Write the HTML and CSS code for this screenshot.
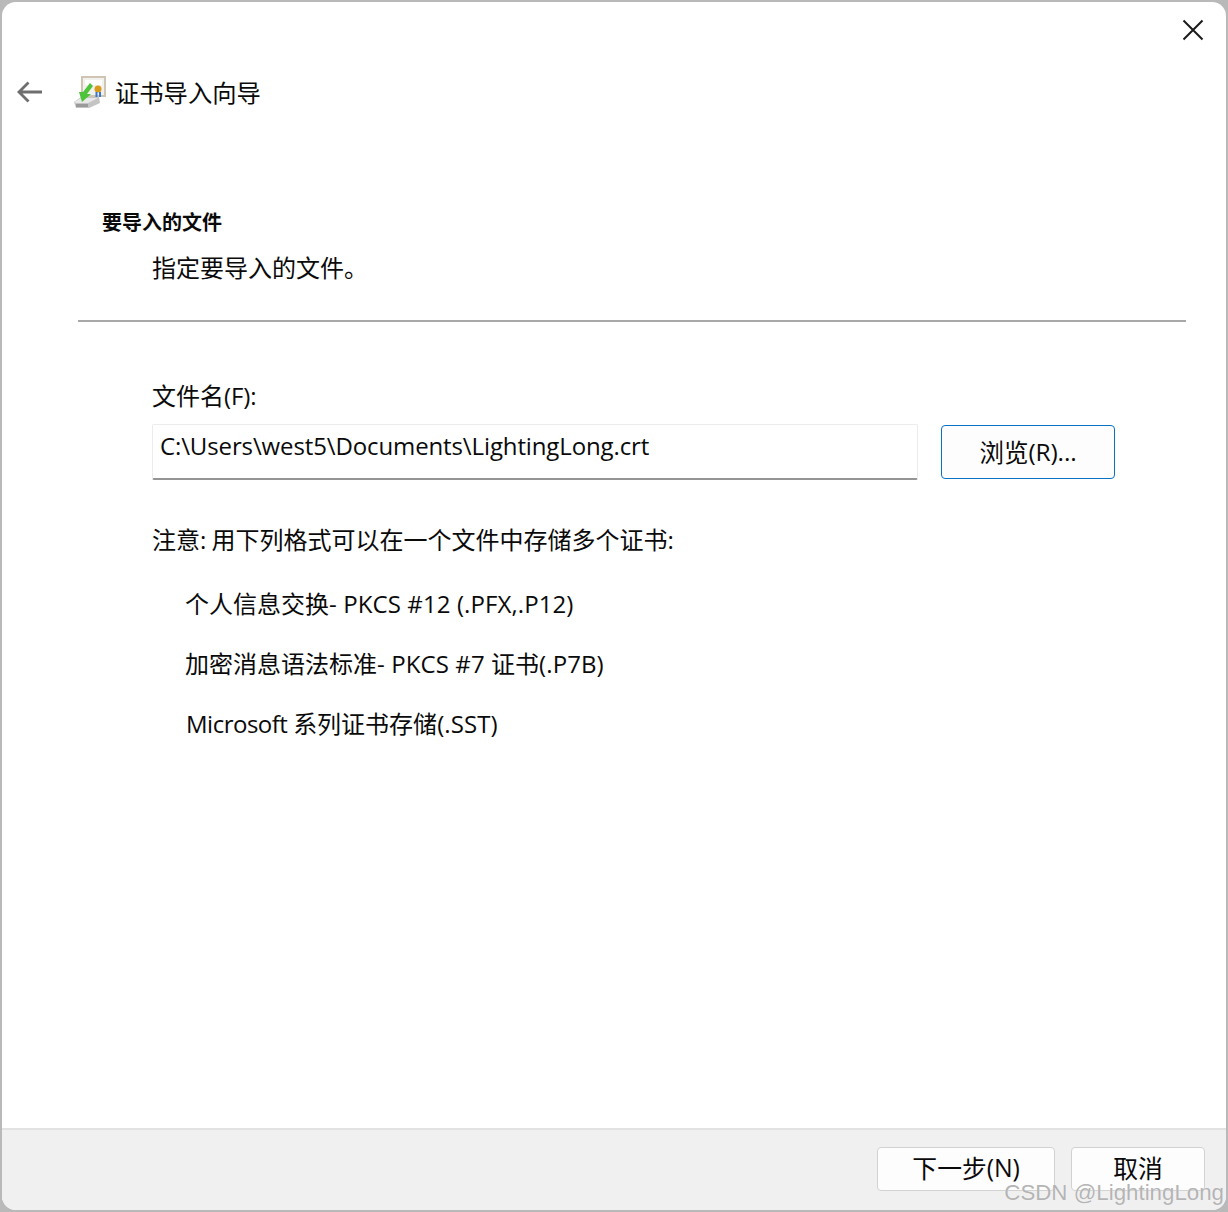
FILE: index.html
```html
<!DOCTYPE html>
<html lang="zh-CN">
<head>
<meta charset="utf-8">
<title>证书导入向导</title>
<link rel="stylesheet" href="styles.css">
</head>
<body>
<div class="window">
  <div class="close-row">
    <svg class="close" width="22" height="22" viewBox="0 0 22 22"><path d="M1.5 1.5L20.5 20.5M20.5 1.5L1.5 20.5" stroke="#1a1a1a" stroke-width="2" fill="none"/></svg>
  </div>
  <div class="title-row">
    <svg class="back" width="26" height="22" viewBox="0 0 26 22"><path d="M25 11H2M11.5 1.500L2 11l9.500 9.500" stroke="#6e6e6e" stroke-width="2.800" fill="none"/></svg>
    <svg class="app-icon" width="34" height="34" viewBox="0 0 34 34">
      <rect x="9" y="2" width="23" height="19" fill="#f1f1ee" stroke="#cfc5b2" stroke-width="2"/>
      <rect x="12" y="5" width="17" height="5" fill="#fff"/>
      <circle cx="25" cy="14" r="3.500" fill="#d99a1c"/>
      <rect x="22.500" y="17" width="2" height="5" fill="#3a78d0"/>
      <rect x="26" y="17" width="2" height="5" fill="#3a78d0"/>
      <path d="M1 27L8 22H26L27 28L16 33H3Z" fill="#c4c4c4"/>
      <path d="M1 27L8 23H25L15 28H3Z" fill="#e8e8e8"/>
      <path d="M3 29H15V32H3Z" fill="#9a9a9a"/>
      <path d="M17 8L20 11L14 19H18L9 27L6 17H10Z" fill="#4fc43a"/>
    </svg>
    <span class="title">证书导入向导</span>
  </div>
  <div class="heading">要导入的文件</div>
  <div class="subheading">指定要导入的文件。</div>
  <hr class="divider">
  <div class="main">
    <div class="label">文件名<span class="lat">(F):</span></div>
    <div class="file-row">
      <div class="input lat">C:\Users\west5\Documents\LightingLong.crt</div>
      <button class="btn btn-focus">浏览<span class="lat">(R)...</span></button>
    </div>
    <div class="note">注意<span class="lat">:</span> 用下列格式可以在一个文件中存储多个证书<span class="lat">:</span></div>
    <ul class="formats">
      <li>个人信息交换<span class="lat wide">- PKCS #12 (.PFX,.P12)</span></li>
      <li>加密消息语法标准<span class="lat wide">- PKCS #7 </span>证书<span class="lat wide">(.P7B)</span></li>
      <li class="ms"><span class="lat tight">Microsoft </span>系列证书存储<span class="lat wide">(.SST)</span></li>
    </ul>
  </div>
  <div class="footer">
    <button class="btn btn-next">下一步<span class="lat">(N)</span></button>
    <button class="btn btn-cancel">取消</button>
    <span class="watermark">CSDN @LightingLong</span>
  </div>
</div>
</body>
</html>
```
FILE: styles.css
```css
* { box-sizing: border-box; }
html, body { margin: 0; height: 100%; }
body {
  width: 1228px;
  height: 1212px;
  overflow: hidden;
  background: #b9b9b9;
  font-family: "Noto Sans CJK SC", "Noto Sans", sans-serif;
  font-size: 24px;
  color: #0a0a0a;
}
.window {
  position: relative;
  width: 1224px;
  height: 1208px;
  margin-left: 2px;
  margin-top: 2px;
  background: #fff;
  border-radius: 14px;
  display: flex;
  flex-direction: column;
  overflow: hidden;
}
.lat { font-family: "Open Sans", "Noto Sans CJK SC", sans-serif; letter-spacing: -0.12px; }
.lat.wide { letter-spacing: 0.1px; }
.lat.tight { letter-spacing: -0.5px; }
.close-row { height: 68px; display: flex; justify-content: flex-end; padding: 17px 22px 0 0; flex: none; }
.close { display: block; }
.title-row { height: 44px; display: flex; align-items: center; padding-left: 15px; flex: none; }
.back { margin-right: 30px; }
.app-icon { margin-right: 8px; }
.title { line-height: 34px; font-size: 24.300px; }
.heading { margin: 93px 0 0 100px; font-size: 20px; line-height: 30px; font-weight: 700; flex: none; }
.subheading { margin: 15px 0 0 150px; line-height: 30px; flex: none; }
.divider { margin: 38px 40px 0 76px; border: 0; height: 2px; background: #a8a8a8; flex: none; }
.main { flex: 1; padding: 58px 0 0 150px; }
.label { line-height: 30px; }
.file-row { display: flex; align-items: flex-start; margin-top: 13px; }
.input {
  width: 766px;
  height: 56px;
  padding: 3px 0 0 7px;
  line-height: 36px;
  border: 1px solid #ececec;
  border-bottom: 2px solid #949494;
  border-radius: 2px;
  white-space: nowrap;
}
.btn {
  font: inherit;
  color: inherit;
  background: #fdfdfd;
  border: 1px solid #d2d2d2;
  border-radius: 4px;
  padding: 0;
  display: flex;
  align-items: center;
  justify-content: center;
}
.btn-focus { width: 174px; height: 54px; margin: 1px 0 0 23px; border: 1.5px solid #0a72c4; border-radius: 4px; line-height: 50px; font-size: 24.500px; }
.note { margin-top: 44px; line-height: 30px; }
.formats { list-style: none; margin: 33px 0 0 33px; padding: 0; display: flex; flex-direction: column; gap: 29px; }
.formats li { line-height: 30px; }
.formats .ms { margin-left: 1px; }
.footer {
  position: relative;
  height: 82px;
  flex: none;
  background: #f0f0f0;
  border-top: 2px solid #e2e2e2;
  display: flex;
  justify-content: flex-end;
  align-items: flex-start;
  padding: 17px 21px 0 0;
  gap: 16px;
}
.btn-next, .btn-cancel { height: 44px; padding-bottom: 4px; font-size: 24.800px; }
.btn-next { width: 178px; }
.btn-cancel { width: 134px; }
.watermark {
  position: absolute;
  right: 2px;
  top: 49px;
  font-family: "Liberation Sans", sans-serif;
  font-size: 22.300px;
  line-height: 28px;
  color: #b4b4b4;
  text-shadow: 0 0 1px #fff;
  white-space: nowrap;
}
```
